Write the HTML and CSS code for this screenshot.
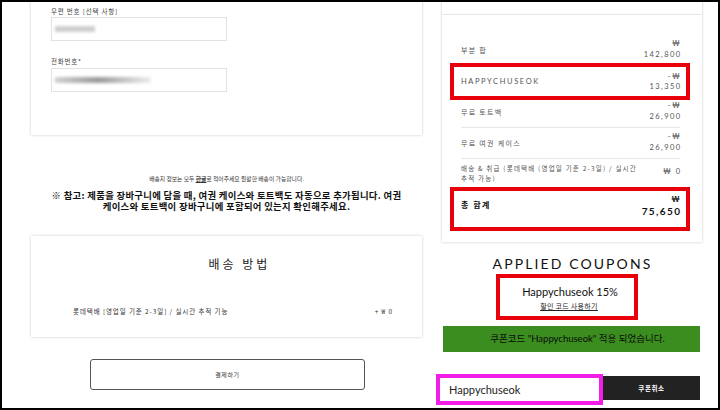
FILE: index.html
```html
<!DOCTYPE html>
<html>

	<head>
		<meta charset="UTF-8">
		<title>주문 결제</title>
		<link rel="stylesheet" href="styles.css">
	</head>

	<body>
		<div class="page">
			<div class="colL">
				<div class="card addr">
					<label class="lbl">우편 번호 [선택 사항]</label>
					<div class="field"><span class="blur b1"></span></div>
					<label class="lbl">전화번호*</label>
					<div class="field"><span class="blur b2"></span></div>
				</div>
				<p class="hint">배송지 정보는 모두 <b>한글</b>로 적어주세요 원활한 배송이 가능합니다.</p>
				<p class="note">※ 참고: 제품을 장바구니에 담을 때, 여권 케이스와 토트백도 자동으로 추가됩니다. 여권<br>케이스와 토트백이 장바구니에 포함되어 있는지 확인해주세요.</p>
				<div class="card ship">
					<h2>배송 방법</h2>
					<div class="shipRow">
						<span>롯데택배 [영업일 기준 2-3일] / 실시간 추적 기능</span>
						<span>+ ₩ 0</span>
					</div>
				</div>
				<button class="pay">결제하기</button>
			</div>

			<div class="colR">
				<div class="card sum">
					<div class="sumTop"></div>
					<div class="rows">
						<div class="row r1">
							<span class="name">부분 합</span>
							<span class="amt">₩<br>142,800</span>
						</div>
						<div class="row hl r2">
							<span class="name en">HAPPYCHUSEOK</span>
							<span class="amt">-₩<br>13,350</span>
						</div>
						<div class="row line r3">
							<span class="name">무료 토트백</span>
							<span class="amt">-₩<br>26,900</span>
						</div>
						<div class="row line r4">
							<span class="name">무료 여권 케이스</span>
							<span class="amt">-₩<br>26,900</span>
						</div>
						<div class="row r5">
							<span class="name wrapName">배송 &amp; 취급 (롯데택배 (영업일 기준 2-3일) / 실시간 추적 가능)</span>
							<span class="amt">₩ 0</span>
						</div>
						<div class="row hl total">
							<span class="name">총 합계</span>
							<span class="amt"><small>₩</small><br>75,650</span>
						</div>
					</div>
				</div>

				<h3 class="cpTitle">APPLIED COUPONS</h3>
				<div class="cpBox">
					<p>Happychuseok 15%</p>
					<a href="#">할인 코드 사용하기</a>
				</div>
				<div class="ok">쿠폰코드 "Happychuseok" 적용 되었습니다.</div>
				<div class="cpForm">
					<div class="cpInput">Happychuseok</div>
					<button>쿠폰취소</button>
				</div>
			</div>
		</div>
	</body>

</html>
```

FILE: styles.css
```css
* {
	box-sizing: border-box;
}

html,
body,
p,
h2,
h3 {
	margin: 0;
	padding: 0;
}

body {
	width: 720px;
	height: 410px;
	border: 2px solid #000;
	overflow: hidden;
	background: #fff;
	color: #222;
	font-family: "Noto Sans CJK KR", "Noto Sans", sans-serif;
}

.page {
	display: flex;
	gap: 20px;
	padding-left: 29px;
	height: 100%;
}

.colL {
	width: 391px;
	display: flex;
	flex-direction: column;
}

.colR {
	width: 260px;
	display: flex;
	flex-direction: column;
}

.card {
	background: #fff;
	box-shadow: 0 0 3px rgba(0, 0, 0, .2);
}

/* address card */
.addr {
	margin-top: -6px;
	padding: 10px 20px 43px;
}

.lbl {
	display: block;
	font-size: 6.5px;
	line-height: 10px;
	letter-spacing: .8px;
	color: #444;
	margin-bottom: 1px;
}

.lbl + .field + .lbl {
	margin-top: 15px;
	margin-bottom: 2px;
}

.field {
	width: 176px;
	height: 24px;
	border: 1px solid #e2e2e2;
	display: flex;
	align-items: center;
	padding-left: 3px;
}

.blur {
	display: block;
	height: 6px;
	filter: blur(1.5px);
}

.b1 {
	width: 40px;
	background: #cfcfcf;
}

.b2 {
	width: 96px;
	background: linear-gradient(90deg, #d0d0d0, #9a9a9a 45%, #c8c8c8 75%, #eee);
}

.hint {
	margin-top: 40px;
	text-align: center;
	font-size: 5.8px;
	line-height: 8px;
	color: #333;
}

.hint b {
	text-decoration: underline;
}

.note {
	margin-top: 7px;
	text-align: center;
	font-size: 9.4px;
	line-height: 11px;
	letter-spacing: .3px;
	font-weight: bold;
	color: #111;
}

/* delivery */
.ship {
	margin-top: 24px;
	padding: 20px 29px 21px 42px;
}

.ship h2 {
	text-align: center;
	font-size: 12px;
	line-height: 16px;
	font-weight: normal;
	letter-spacing: 3px;
	color: #222;
	padding-left: 13px;
}

.shipRow {
	margin-top: 34px;
	display: flex;
	justify-content: space-between;
	font-size: 6.5px;
	line-height: 10px;
	letter-spacing: .9px;
	color: #333;
}

.pay {
	margin: 22px 0 0 59px;
	width: 275px;
	height: 31px;
	border: 1.5px solid #555;
	border-radius: 3px;
	background: #fff;
	font-family: "Noto Sans CJK KR", sans-serif;
	font-size: 6px;
	letter-spacing: .6px;
	color: #333;
	padding: 0;
}

/* summary */
.sum {
	margin-top: -6px;
	width: 260px;
	padding-bottom: 11px;
}

.sumTop {
	height: 19px;
	border-bottom: 1px solid #e6e6e6;
}

.rows {
	padding: 0 22px 0 19px;
}

.row {
	display: flex;
	justify-content: space-between;
	align-items: center;
	font-size: 7px;
	line-height: 10px;
	letter-spacing: 1.3px;
	color: #555;
}

.amt {
	text-align: right;
	font-family: "Lato", "Noto Sans CJK KR", sans-serif;
	font-size: 7.5px;
	line-height: 10.5px;
	letter-spacing: 1.4px;
	margin-right: -1.4px;
}

.en {
	font-family: "Lato", sans-serif;
	font-size: 7.5px;
	letter-spacing: 1.6px;
}

.r1 {
	padding: 24px 0 3px;
}

.hl {
	border: 4px solid #e8000b;
	margin: 0 -10px 0 -11px;
	padding: 5px 6px 4px 7px;
}

.r2 .amt {
	line-height: 10px;
}

.line {
	border-bottom: 1px solid #e8e8e8;
}

.r3 {
	padding: 1px 0 5px;
}

.r4 {
	padding: 4px 0 5px;
}

.r5 {
	padding: 5px 0 4px;
	align-items: flex-start;
}

.wrapName {
	width: 180px;
	font-size: 6.5px;
	line-height: 9.5px;
	letter-spacing: 1.2px;
}

.r5 .amt {
	margin-top: 3px;
}

.total {
	padding: 1px 6px 9px 7px;
}

.total .name {
	font-size: 8px;
	font-weight: bold;
	color: #111;
	letter-spacing: 1.5px;
}

.total .amt {
	font-weight: bold;
	color: #111;
	font-size: 10px;
	line-height: 13px;
	letter-spacing: 1.4px;
}

.total small {
	font-size: 8px;
	line-height: 10px;
}

/* coupons */
.cpTitle {
	margin-top: 13px;
	text-align: center;
	font-family: "Lato", sans-serif;
	font-weight: normal;
	font-size: 14px;
	line-height: 18px;
	letter-spacing: 2.1px;
	color: #111;
	padding-left: 1px;
}

.cpBox {
	margin: 1px 0 0 54px;
	width: 142px;
	height: 46px;
	border: 4px solid #e8000b;
	padding-top: 7px;
	text-align: center;
	font-size: 7px;
	line-height: 10px;
}

.cpBox p {
	font-family: "Lato", sans-serif;
	font-size: 11px;
	line-height: 14px;
	color: #111;
	padding-left: 6px;
}

.cpBox a {
	display: block;
	width: 60px;
	margin: 2px 0 0 39px;
	font-size: 7px;
	line-height: 10px;
	color: #222;
	letter-spacing: .3px;
	white-space: nowrap;
}

.ok {
	margin: 6px 0 0 1px;
	width: 257px;
	height: 26px;
	background: #3a8d1e;
	color: #0b0b0b;
	font-family: "Lato", "Noto Sans CJK KR", sans-serif;
	font-size: 9.5px;
	line-height: 26px;
	text-align: center;
	padding-left: 12px;
}

.cpForm {
	margin: 22px 0 0 -6px;
	display: flex;
	align-items: flex-start;
}

.cpInput {
	flex: none;
	width: 167px;
	height: 31px;
	border: 4px solid #f21ee8;
	padding-left: 9px;
	font-family: "Lato", sans-serif;
	font-size: 11px;
	line-height: 23px;
	color: #222;
}

.cpForm button {
	flex: none;
	margin-top: 2px;
	width: 97px;
	height: 24px;
	border: 0;
	background: #222;
	color: #fff;
	font-family: "Noto Sans CJK KR", sans-serif;
	font-size: 6.5px;
	font-weight: bold;
	letter-spacing: .6px;
	padding: 0;
}
```
